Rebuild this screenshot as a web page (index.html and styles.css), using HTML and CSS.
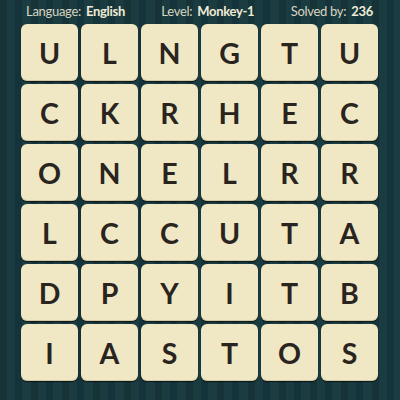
FILE: index.html
```html
<!DOCTYPE html>
<html>
<head>
<meta charset="utf-8">
<link rel="stylesheet" href="styles.css">
</head>
<body>
<div class="page">
  <header class="info">
    <span class="item">Language: <b>English</b></span>
    <span class="item">Level: <b>Monkey-1</b></span>
    <span class="item">Solved by: <b>236</b></span>
  </header>
  <main class="board">
    <div class="tile">U</div><div class="tile">L</div><div class="tile">N</div><div class="tile">G</div><div class="tile">T</div><div class="tile">U</div>
    <div class="tile">C</div><div class="tile">K</div><div class="tile">R</div><div class="tile">H</div><div class="tile">E</div><div class="tile">C</div>
    <div class="tile">O</div><div class="tile">N</div><div class="tile">E</div><div class="tile">L</div><div class="tile">R</div><div class="tile">R</div>
    <div class="tile">L</div><div class="tile">C</div><div class="tile">C</div><div class="tile">U</div><div class="tile">T</div><div class="tile">A</div>
    <div class="tile">D</div><div class="tile">P</div><div class="tile">Y</div><div class="tile">I</div><div class="tile">T</div><div class="tile">B</div>
    <div class="tile">I</div><div class="tile">A</div><div class="tile">S</div><div class="tile">T</div><div class="tile">O</div><div class="tile">S</div>
  </main>
</div>
</body>
</html>
```
FILE: styles.css
```css
html, body {
  margin: 0;
  padding: 0;
}
body {
  width: 400px;
  height: 400px;
  overflow: hidden;
  background-color: #163539;
  background-image: repeating-linear-gradient(90deg,
    #163438 0px, #163438 7px,
    #1a3b40 7px, #1a3b40 15px,
    #15333a 15px, #15333a 22px,
    #1b3c41 22px, #1b3c41 31px);
  font-family: Lato, "Open Sans", sans-serif;
}
.page {
  display: flex;
  flex-direction: column;
}
.info {
  display: flex;
  justify-content: space-between;
  height: 24px;
  box-sizing: border-box;
  padding: 3px 27px 0 26px;
  font-size: 13px;
  letter-spacing: -0.3px;
  color: #d8d5c0;
  line-height: 17px;
}
.info b {
  color: #efebd5;
  font-weight: 700;
  margin-left: 2px;
}
.board {
  display: grid;
  grid-template-columns: repeat(6, 57px);
  grid-auto-rows: 57px;
  gap: 3px;
  margin-left: 21px;
}
.tile {
  background: #f0e8c5;
  border-radius: 6px;
  box-shadow: 0 1px 1px rgba(0, 0, 0, 0.6), inset 0 -1px 0 rgba(120, 100, 60, 0.25);
  display: flex;
  align-items: center;
  justify-content: center;
  font-size: 28.5px;
  font-weight: 700;
  color: #2a241f;
  padding-top: 1px;
  box-sizing: border-box;
}
```
